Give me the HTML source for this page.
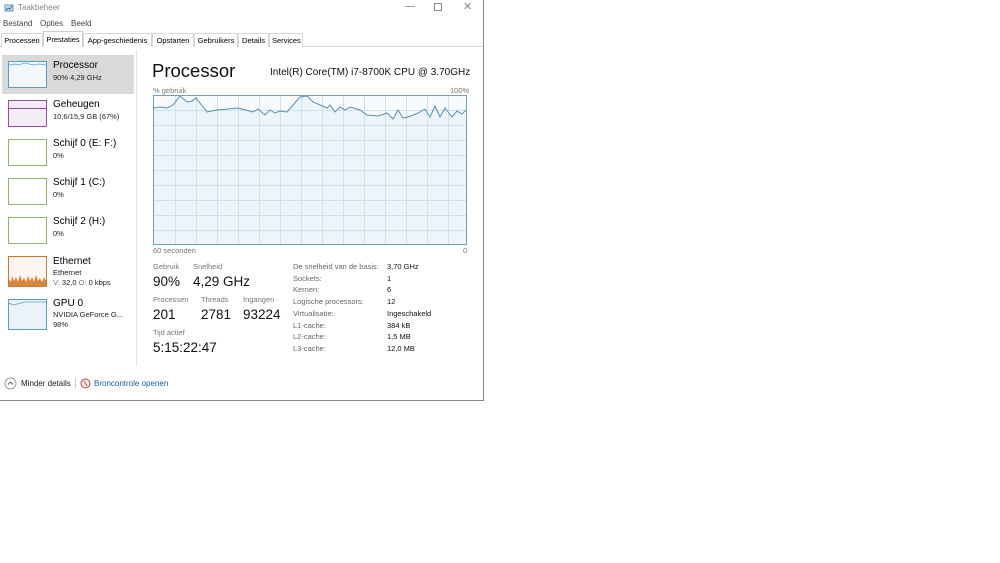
<!DOCTYPE html><html><head><style>
*{margin:0;padding:0;box-sizing:border-box}
body{width:1000px;height:563px;background:#fff;font-family:"Liberation Sans",sans-serif;position:relative;overflow:hidden;color:#000}
.a{position:absolute;white-space:nowrap}
.win{position:absolute;left:0;top:0;width:484px;height:401px;border-right:1px solid #888;border-bottom:1px solid #888}
.tab{position:absolute;top:33px;height:14px;font-size:7.5px;line-height:13px;padding:0 2px;border:1px solid #d9d9d9;border-bottom:none;background:#fff;color:#000;white-space:nowrap;overflow:hidden;text-align:center}
.th{position:absolute;left:8px;width:39px;height:27px;border:1px solid}
.t1{font-size:10px;color:#000}
.t2{font-size:7.5px;color:#222}
.lbl{font-size:7.5px;color:#777}
.big{font-size:13.5px;color:#111}
.k{font-size:7.5px;color:#666}
.v{font-size:7.5px;color:#111}
</style></head><body>
<div class="win"></div>
<svg class="a" style="left:4px;top:3px" width="11" height="10"><rect x="1" y="2" width="8" height="6" fill="#cfe3f3" stroke="#6b8fb0"/><path d="M2 7 L4 5 L6 6 L8 3" stroke="#3a6ea5" fill="none"/></svg>
<div class="a" style="left:18px;top:3px;font-size:8px;color:#888">Taakbeheer</div>
<div class="a" style="left:405px;top:1px;font-size:10px;color:#777">—</div>
<div class="a" style="left:434px;top:3px;width:8px;height:8px;border:1px solid #888"></div>
<div class="a" style="left:463px;top:0px;font-size:11px;color:#888">✕</div>
<div class="a" style="left:3px;top:19px;font-size:8px;color:#444">Bestand</div>
<div class="a" style="left:40px;top:19px;font-size:8px;color:#444">Opties</div>
<div class="a" style="left:71px;top:19px;font-size:8px;color:#444">Beeld</div>
<div class="a" style="left:0;top:46px;width:483px;border-top:1px solid #d9d9d9"></div>
<div class="tab" style="left:1px;width:42px">Processen</div>
<div class="tab" style="left:43px;top:31px;height:16px;width:40px;border-color:#ccc;line-height:15px">Prestaties</div>
<div class="tab" style="left:83px;width:69px">App-geschiedenis</div>
<div class="tab" style="left:152px;width:42px">Opstarten</div>
<div class="tab" style="left:194px;width:44px">Gebruikers</div>
<div class="tab" style="left:238px;width:31px">Details</div>
<div class="tab" style="left:269px;width:34px">Services</div>
<div class="a" style="left:2px;top:55px;width:132px;height:39px;background:#d9d9d9"></div>
<div class="a" style="left:136px;top:50px;height:316px;border-left:1px solid #e3e3e3"></div>
<div class="th" style="top:61px;border-color:#5b9bc6;background:#f1f7fb"><svg width="37" height="25" style="position:absolute;left:0;top:0"><path d="M0 3 L6 2 L10 3 L15 1 L20 2 L25 3 L30 2 L37 3" stroke="#5b9bc6" fill="none" stroke-width=".8"/></svg></div>
<div class="a t1" style="left:53px;top:60px">Processor</div><div class="a t2" style="left:53px;top:73px">90% 4,29 GHz</div>
<div class="th" style="top:100px;border-color:#9a4aaa;background:#f3edf5"><div style="position:absolute;left:0;right:0;top:7px;border-top:1px solid #9a4aaa"></div></div>
<div class="a t1" style="left:53px;top:99px">Geheugen</div><div class="a t2" style="left:53px;top:112px">10,6/15,9 GB (67%)</div>
<div class="th" style="top:139px;border-color:#8fb56a"></div>
<div class="a t1" style="left:53px;top:138px">Schijf 0 (E: F:)</div><div class="a t2" style="left:53px;top:151px">0%</div>
<div class="th" style="top:178px;border-color:#8fb56a"></div>
<div class="a t1" style="left:53px;top:177px">Schijf 1 (C:)</div><div class="a t2" style="left:53px;top:190px">0%</div>
<div class="th" style="top:217px;border-color:#8fb56a"></div>
<div class="a t1" style="left:53px;top:216px">Schijf 2 (H:)</div><div class="a t2" style="left:53px;top:229px">0%</div>
<div class="th" style="top:256px;height:31px;border-color:#c87a3a;background:#fdf6f0"><svg width="37" height="29" style="position:absolute;left:0;top:0"><path d="M0 29 L0 22 L2 25 L3 19 L5 24 L7 20 L9 25 L11 18 L13 24 L15 21 L17 25 L19 19 L21 24 L23 20 L25 25 L27 18 L29 24 L31 21 L33 25 L35 20 L37 24 L37 29Z" fill="#d9853f"/></svg></div>
<div class="a t1" style="left:53px;top:256px">Ethernet</div><div class="a t2" style="left:53px;top:268px">Ethernet</div><div class="a t2" style="left:53px;top:278px"><span style="color:#777">V:</span> 32,0 <span style="color:#777">O:</span> 0 kbps</div>
<div class="th" style="top:299px;height:31px;border-color:#5b9bc6;background:#eaf3f9"><svg width="37" height="29" style="position:absolute;left:0;top:0"><path d="M0 3 L4 5 L8 4 L12 3 L16 2 L20 2 L24 2 L37 2" stroke="#5b9bc6" fill="none" stroke-width=".8"/></svg></div>
<div class="a t1" style="left:53px;top:298px">GPU 0</div><div class="a t2" style="left:53px;top:310px">NVIDIA GeForce G...</div><div class="a t2" style="left:53px;top:320px">98%</div>
<div class="a" style="left:152px;top:60px;font-size:18.5px;color:#111">Processor</div>
<div class="a" style="left:270px;top:67px;font-size:10px;color:#111">Intel(R) Core(TM) i7-8700K CPU @ 3.70GHz</div>
<div class="a lbl" style="left:153px;top:86px">% gebruik</div>
<div class="a lbl" style="left:450px;top:86px">100%</div>
<svg class="a" style="left:153px;top:95px" width="315" height="150">
<rect x="0.5" y="0.5" width="313" height="149" fill="#f7fbfd"/>
<path d="M0 13 L7 12 L14 13 L20 10 L27 1 L34 7 L39 6 L43 3 L54 17 L64 15 L85 13 L100 17 L105 14 L112 20 L117 15 L122 18 L127 16 L134 17 L140 10 L147 2 L154 1 L160 7 L174 13 L177 10 L182 17 L187 12 L192 15 L197 12 L207 15 L214 20 L225 21 L234 18 L240 24 L245 15 L250 23 L255 22 L265 18 L272 14 L277 22 L282 11 L287 22 L292 13 L299 22 L304 16 L309 19 L313 15 L313 149 L0 149Z" fill="#eef5fa"/>
<g stroke="#cfe1ed" stroke-width="1">
<path d="M0 15.5H314M0 30.5H314M0 45.5H314M0 60.5H314M0 75.5H314M0 90.5H314M0 105.5H314M0 120.5H314M0 135.5H314"/>
<path d="M22.5 0V150M43.5 0V150M64.5 0V150M85.5 0V150M106.5 0V150M127.5 0V150M148.5 0V150M169.5 0V150M190.5 0V150M211.5 0V150M232.5 0V150M253.5 0V150M274.5 0V150M295.5 0V150"/>
</g>
<rect x="0.5" y="0.5" width="313" height="149" fill="none" stroke="#6ea3c7"/>
<path d="M0 13 L7 12 L14 13 L20 10 L27 1 L34 7 L39 6 L43 3 L54 17 L64 15 L85 13 L100 17 L105 14 L112 20 L117 15 L122 18 L127 16 L134 17 L140 10 L147 2 L154 1 L160 7 L174 13 L177 10 L182 17 L187 12 L192 15 L197 12 L207 15 L214 20 L225 21 L234 18 L240 24 L245 15 L250 23 L255 22 L265 18 L272 14 L277 22 L282 11 L287 22 L292 13 L299 22 L304 16 L309 19 L313 15" fill="none" stroke="#5a8fb0" stroke-width="1"/>
</svg>
<div class="a lbl" style="left:153px;top:246px">60 seconden</div>
<div class="a lbl" style="left:463px;top:246px">0</div>
<div class="a lbl" style="left:153px;top:262px">Gebruik</div><div class="a lbl" style="left:193px;top:262px">Snelheid</div>
<div class="a big" style="left:153px;top:274px">90%</div><div class="a big" style="left:193px;top:274px">4,29 GHz</div>
<div class="a lbl" style="left:153px;top:295px">Processen</div><div class="a lbl" style="left:201px;top:295px">Threads</div><div class="a lbl" style="left:243px;top:295px">Ingangen</div>
<div class="a big" style="left:153px;top:307px">201</div><div class="a big" style="left:201px;top:307px">2781</div><div class="a big" style="left:243px;top:307px">93224</div>
<div class="a lbl" style="left:153px;top:328px">Tijd actief</div>
<div class="a big" style="left:153px;top:340px">5:15:22:47</div>
<div class="a k" style="left:293px;top:262px">De snelheid van de basis:</div><div class="a v" style="left:387px;top:262px">3,70 GHz</div>
<div class="a k" style="left:293px;top:274px">Sockets:</div><div class="a v" style="left:387px;top:274px">1</div>
<div class="a k" style="left:293px;top:285px">Kernen:</div><div class="a v" style="left:387px;top:285px">6</div>
<div class="a k" style="left:293px;top:297px">Logische processors:</div><div class="a v" style="left:387px;top:297px">12</div>
<div class="a k" style="left:293px;top:309px">Virtualisatie:</div><div class="a v" style="left:387px;top:309px">Ingeschakeld</div>
<div class="a k" style="left:293px;top:321px">L1-cache:</div><div class="a v" style="left:387px;top:321px">384 kB</div>
<div class="a k" style="left:293px;top:332px">L2-cache:</div><div class="a v" style="left:387px;top:332px">1,5 MB</div>
<div class="a k" style="left:293px;top:344px">L3-cache:</div><div class="a v" style="left:387px;top:344px">12,0 MB</div>
<svg class="a" style="left:4px;top:377px" width="13" height="13"><circle cx="6.5" cy="6.5" r="5.5" fill="none" stroke="#999"/><path d="M4 7.5 L6.5 5 L9 7.5" fill="none" stroke="#666"/></svg>
<div class="a" style="left:21px;top:379px;font-size:8px;color:#222">Minder details</div>
<div class="a" style="left:75px;top:378px;height:10px;border-left:1px solid #ccc"></div>
<svg class="a" style="left:80px;top:378px" width="11" height="11"><circle cx="5.5" cy="5.5" r="4.5" fill="#f6e6e6" stroke="#b05050"/><path d="M4 3 L7 8" stroke="#b05050"/></svg>
<div class="a" style="left:94px;top:379px;font-size:8px;color:#1a5fa8">Broncontrole openen</div>
</body></html>
